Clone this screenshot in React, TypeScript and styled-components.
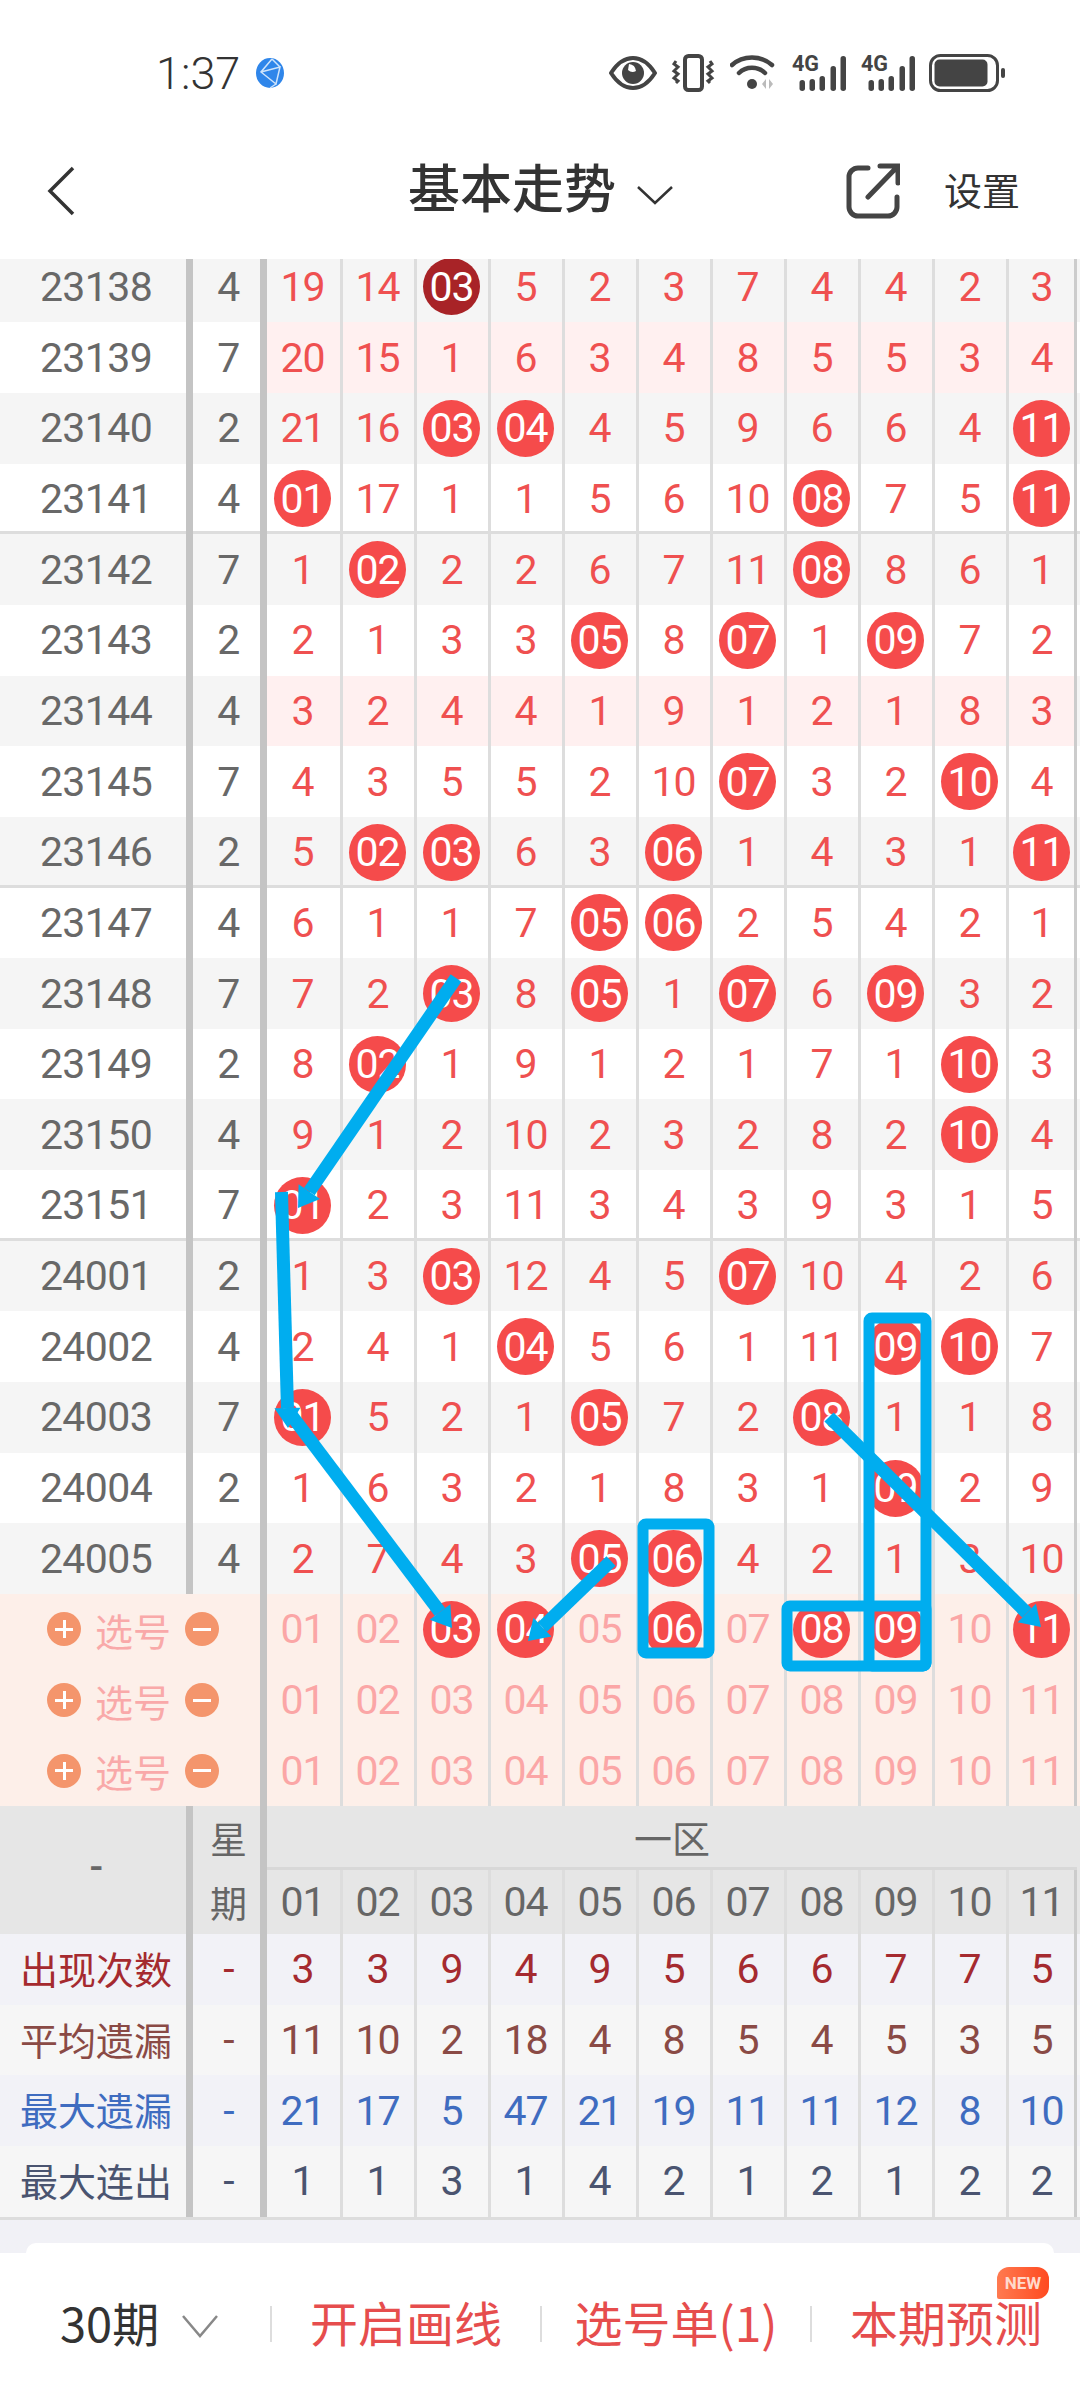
import styled, { createGlobalStyle } from 'styled-components';

const GlobalStyle = createGlobalStyle`
  html, body {
    margin: 0;
    padding: 0;
    background: #fff;
  }
  * {
    box-sizing: border-box;
  }
`;

const NUM_FONT = `Roboto, 'Noto Sans CJK SC', sans-serif`;
const CJK_FONT = `'Noto Sans CJK SC', 'Noto Sans', sans-serif`;
const ROW_H = 70.67;
const GRID = '193px 74px 76px repeat(9, 74px) 68px';

// "b" prefix = ball on this number
const ROWS = [
  ['23138', '4', '19 14 d03 5 2 3 7 4 4 2 3'],
  ['23139', '7', '20 15 1 6 3 4 8 5 5 3 4', 'hot'],
  ['23140', '2', '21 16 b03 b04 4 5 9 6 6 4 b11'],
  ['23141', '4', 'b01 17 1 1 5 6 10 b08 7 5 b11', 'sep'],
  ['23142', '7', '1 b02 2 2 6 7 11 b08 8 6 1'],
  ['23143', '2', '2 1 3 3 b05 8 b07 1 b09 7 2'],
  ['23144', '4', '3 2 4 4 1 9 1 2 1 8 3', 'hot'],
  ['23145', '7', '4 3 5 5 2 10 b07 3 2 b10 4'],
  ['23146', '2', '5 b02 b03 6 3 b06 1 4 3 1 b11', 'sep'],
  ['23147', '4', '6 1 1 7 b05 b06 2 5 4 2 1'],
  ['23148', '7', '7 2 b03 8 b05 1 b07 6 b09 3 2'],
  ['23149', '2', '8 b02 1 9 1 2 1 7 1 b10 3'],
  ['23150', '4', '9 1 2 10 2 3 2 8 2 b10 4'],
  ['23151', '7', 'b01 2 3 11 3 4 3 9 3 1 5', 'sep'],
  ['24001', '2', '1 3 b03 12 4 5 b07 10 4 2 6'],
  ['24002', '4', '2 4 1 b04 5 6 1 11 b09 b10 7'],
  ['24003', '7', 'b01 5 2 1 b05 7 2 b08 1 1 8'],
  ['24004', '2', '1 6 3 2 1 8 3 1 b09 2 9'],
  ['24005', '4', '2 7 4 3 b05 b06 4 2 1 3 10'],
];

const PICKS = [
  '01 02 b03 b04 05 b06 07 b08 b09 10 b11',
  '01 02 03 04 05 06 07 08 09 10 11',
  '01 02 03 04 05 06 07 08 09 10 11',
];

const STATS = [
  { label: '出现次数', color: '#a52a2f', bg: '#f2f2f7', nums: '3 3 9 4 9 5 6 6 7 7 5' },
  { label: '平均遗漏', color: '#8a4a45', bg: '#f6f6f6', nums: '11 10 2 18 4 8 5 4 5 3 5' },
  { label: '最大遗漏', color: '#3f6cc0', bg: '#f2f2f7', nums: '21 17 5 47 21 19 11 11 12 8 10' },
  { label: '最大连出', color: '#4a5470', bg: '#f6f6f6', nums: '1 1 3 1 4 2 1 2 1 2 2' },
];

const HEAD_NUMS = '01 02 03 04 05 06 07 08 09 10 11'.split(' ');

const Page = styled.div`
  position: relative;
  width: 1080px;
  height: 2400px;
  overflow: hidden;
  background: #f1f1f6;
`;

const TopArea = styled.header`
  position: relative;
  z-index: 2;
  height: 259px;
  background: #fff;
`;

const StatusBar = styled.div`
  display: flex;
  align-items: center;
  justify-content: space-between;
  height: 146px;
  padding: 0 75px 0 156px;
`;

const TimeBox = styled.div`
  display: flex;
  align-items: center;
  gap: 16px;
  font: 300 45px ${NUM_FONT};
  color: #333;
`;

const StatusIcons = styled.div`
  display: flex;
  align-items: center;
  gap: 14.4px;
`;

const NavBar = styled.div`
  display: flex;
  align-items: center;
  height: 90px;
  padding: 0 60px 0 46px;
`;

const Title = styled.div`
  display: flex;
  align-items: center;
  gap: 20px;
  margin: 0 0 12px 332px;
  font: 500 52px ${CJK_FONT};
  color: #333;
  svg {
    margin-top: 20px;
  }
`;

const NavRight = styled.div`
  display: flex;
  align-items: center;
  gap: 44px;
  margin-left: auto;
`;

const NavLabel = styled.span`
  padding-bottom: 6px;
  font: 400 38px ${CJK_FONT};
  color: #333;
`;

const Board = styled.div`
  margin-top: -7.4px;
`;

const Row = styled.div<{ $sep?: boolean; $bg: string }>`
  display: grid;
  grid-template-columns: ${GRID};
  height: ${ROW_H}px;
  background: ${({ $bg }) => $bg};
  box-shadow: ${({ $sep }) => ($sep ? 'inset 0 -3px 0 #ddd' : 'none')};
`;

const Cell = styled.div<{ $color?: string; $bg?: string }>`
  display: flex;
  align-items: center;
  justify-content: center;
  min-width: 0;
  padding-right: 2px;
  font: 400 41px ${NUM_FONT};
  letter-spacing: -1px;
  color: ${({ $color }) => $color || '#ef5050'};
  background: ${({ $bg }) => $bg || 'transparent'};
  border-right: 3px solid #ddd;
  &:last-child {
    padding-right: 0;
    border-right-color: #ccc;
  }
`;

const PeriodCell = styled.div<{ $label?: boolean; $color?: string }>`
  display: flex;
  align-items: center;
  justify-content: center;
  padding: ${({ $label }) => ($label ? '0 0 4px 6px' : '0 0 0 6px')};
  font: ${({ $label }) =>
    $label ? `400 38px ${CJK_FONT}` : `400 41px ${NUM_FONT}`};
  letter-spacing: ${({ $label }) => ($label ? '0' : '-0.6px')};
  color: ${({ $color }) => $color || '#686868'};
  border-right: 7px solid #c4c4c4;
`;

const WeekCell = styled(PeriodCell)`
  padding-left: 4px;
`;

const Ball = styled.span<{ $dark?: boolean }>`
  display: flex;
  align-items: center;
  justify-content: center;
  flex: none;
  width: 57px;
  height: 57px;
  border-radius: 50%;
  background: ${({ $dark }) => ($dark ? '#a82327' : '#f54b4b')};
  color: #fff;
`;

const PickLabel = styled.div`
  grid-column: 1 / 3;
  display: flex;
  align-items: center;
  padding: 0 0 0 47px;
  gap: 14px;
  font: 400 38px ${CJK_FONT};
  color: #f9a9a9;
  background: #fdefe9;
  border-right: 7px solid #c4c4c4;
`;

const Round = styled.span`
  position: relative;
  flex: none;
  width: 34px;
  height: 34px;
  border-radius: 50%;
  background: #f4956c;
  &::before {
    content: '';
    position: absolute;
    left: 8px;
    right: 8px;
    top: 15.5px;
    height: 3px;
    background: #fff;
  }
`;

const RoundPlus = styled(Round)`
  &::after {
    content: '';
    position: absolute;
    top: 8px;
    bottom: 8px;
    left: 15.5px;
    width: 3px;
    background: #fff;
  }
`;

const HeadBlock = styled.div`
  display: grid;
  grid-template-columns: ${GRID};
  grid-template-rows: 64px 64px;
  height: 128px;
  background: #e6e6e6;
`;

const HeadSide = styled(PeriodCell)`
  grid-row: 1 / 3;
  padding-bottom: 6px;
  font: 500 40px ${NUM_FONT};
`;

const HeadWeek = styled.div`
  grid-row: 1 / 3;
  grid-column: 2;
  display: grid;
  grid-template-rows: 64px 64px;
  align-items: center;
  justify-items: center;
  padding-left: 4px;
  font: 400 37px ${CJK_FONT};
  color: #666;
  border-right: 7px solid #c4c4c4;
`;

const HeadZone = styled.div`
  grid-column: 3 / -1;
  display: flex;
  align-items: center;
  justify-content: center;
  font: 400 38px ${CJK_FONT};
  color: #666;
  border-bottom: 3px solid #d8d8d8;
`;

const BottomShelf = styled.div`
  padding: 23px 26px 0;
  border-top: 3px solid #ddd;
`;

const ShelfCard = styled.div`
  height: 10px;
  background: #fff;
  border-radius: 20px 20px 0 0;
`;

const BottomBar = styled.footer`
  display: flex;
  align-items: center;
  height: 150px;
  padding: 0 0 8px 60px;
  background: #fff;
`;

const RangePicker = styled.div`
  display: flex;
  align-items: center;
  gap: 22px;
  width: 210px;
  padding-bottom: 5px;
  font: 400 47px ${CJK_FONT};
  color: #333;
  svg {
    margin-top: 10px;
  }
`;

const BarAction = styled.div`
  position: relative;
  display: flex;
  align-items: center;
  justify-content: center;
  width: 270px;
  height: 36px;
  padding-bottom: 5px;
  font: 400 48px ${CJK_FONT};
  color: #e64d4d;
  border-left: 2px solid #ddd;
`;

const NewBadge = styled.span`
  position: absolute;
  top: -39px;
  right: 31px;
  width: 52px;
  height: 32px;
  font: 700 17px/32px ${NUM_FONT};
  text-align: center;
  color: #ffd9cc;
  background: linear-gradient(90deg, #ff7a50, #ff4a20);
  border-radius: 12px 12px 12px 2px;
`;

const DrawLayer = styled.svg`
  position: absolute;
  left: 0;
  top: 0;
  z-index: 1;
  pointer-events: none;
`;

const BLUE = '#00adef';

const Arrow = ({ x1, y1, x2, y2 }: { x1: number; y1: number; x2: number; y2: number }) => {
  const len = Math.hypot(x2 - x1, y2 - y1);
  const ux = (x2 - x1) / len;
  const uy = (y2 - y1) / len;
  const bx = x2 - ux * 20;
  const by = y2 - uy * 20;
  const hw = 13;
  return (
    <>
      <line x1={x1} y1={y1} x2={bx} y2={by} stroke={BLUE} strokeWidth={13} strokeLinecap="butt" />
      <polygon
        points={`${x2},${y2} ${bx - uy * hw},${by + ux * hw} ${bx + uy * hw},${by - ux * hw}`}
        fill={BLUE}
      />
    </>
  );
};

const Num = ({ value }: { value: string }) => {
  if (value[0] === 'b') return <Ball>{value.slice(1)}</Ball>;
  if (value[0] === 'd') return <Ball $dark>{value.slice(1)}</Ball>;
  return <>{value}</>;
};

const Eye = () => (
  <svg width="48" height="34" viewBox="0 0 48 34" fill="none">
    <path d="M2 17C9 6 16 2 24 2s15 4 22 15c-7 11-14 15-22 15S9 28 2 17z" stroke="#444" strokeWidth="4" strokeLinejoin="round" />
    <circle cx="24" cy="17" r="11" fill="#444" />
    <path d="M20 8a8 8 0 0 1 7 7 7 7 0 0 1-8-1z" fill="#fff" />
  </svg>
);

const Vibrate = () => (
  <svg width="44" height="38" viewBox="0 0 44 38" fill="none" stroke="#444" strokeWidth="3">
    <rect x="14" y="2" width="17" height="34" rx="3.5" strokeWidth="4" />
    <path d="M5 7l-2 3 4 3-4 4 4 3-4 4 4 3-2 2" />
    <path d="M39 7l2 3-4 3 4 4-4 3 4 4-4 3 2 2" />
  </svg>
);

const Wifi = () => (
  <svg width="48" height="38" viewBox="0 0 48 38" fill="none" stroke="#444" strokeWidth="4.5" strokeLinecap="round">
    <path d="M2 11C13 1 31 1 42 11" />
    <path d="M9 19c7-7 19-7 26 0" />
    <circle cx="22" cy="30" r="5" fill="#444" stroke="none" />
    <path d="M36 25v10l-4-5zM39 25v10l4-5z" fill="#bbb" stroke="none" />
  </svg>
);

const Signal = () => (
  <svg width="54" height="50" viewBox="0 -6 54 50" fill="#444">
    <text x="0" y="17" fontFamily="Roboto, sans-serif" fontSize="22" fontWeight="700" textLength="27" lengthAdjust="spacingAndGlyphs">4G</text>
    <rect x="7.5" y="26" width="5.5" height="11" rx="2.7" />
    <rect x="17.5" y="25" width="5.5" height="12" rx="2.7" />
    <rect x="27.5" y="22" width="5.5" height="15" rx="2.7" />
    <rect x="38.5" y="12" width="5.5" height="25" rx="2.7" />
    <rect x="48.5" y="2" width="5.5" height="35" rx="2.7" />
  </svg>
);

const Battery = () => (
  <svg width="76" height="38" viewBox="0 0 76 38" fill="none">
    <rect x="1.5" y="1.5" width="67" height="35" rx="10" stroke="#444" strokeWidth="3" />
    <rect x="5.5" y="5.5" width="53" height="27" rx="5" fill="#444" />
    <rect x="72" y="14" width="4" height="10" rx="2" fill="#444" />
  </svg>
);

const Globe = () => (
  <svg width="28" height="32" viewBox="0 0 28 32">
    <ellipse cx="14" cy="16" rx="14" ry="15" fill="#2f86ea" />
    <path d="M16 2L5 15l15 12L24 10 5 15M16 2l8 8M20 27l-6 4" stroke="#cfe4fb" strokeWidth="1.5" fill="none" />
  </svg>
);

const App = () => {
  return (
    <Page>
      <GlobalStyle />
      <TopArea>
        <StatusBar>
          <TimeBox>
            1:37
            <Globe />
          </TimeBox>
          <StatusIcons>
            <Eye />
            <Vibrate />
            <Wifi />
            <Signal />
            <Signal />
            <Battery />
          </StatusIcons>
        </StatusBar>
        <NavBar>
          <svg width="30" height="50" viewBox="0 0 30 50" fill="none" stroke="#333" strokeWidth="3.5">
            <path d="M27 2L4 25l23 23" />
          </svg>
          <Title>
            基本走势
            <svg width="38" height="20" viewBox="0 0 38 20" fill="none" stroke="#333" strokeWidth="2.5">
              <path d="M2 2l17 16L36 2" />
            </svg>
          </Title>
          <NavRight>
            <svg width="54" height="56" viewBox="0 0 54 56" fill="none" stroke="#444" strokeWidth="5" strokeLinecap="round">
              <path d="M22 5H12a9 9 0 0 0-9 9v30a9 9 0 0 0 9 9h30a9 9 0 0 0 9-9V34" />
              <path d="M22 34L51 4M34 3h18v17" />
            </svg>
            <NavLabel>设置</NavLabel>
          </NavRight>
        </NavBar>
      </TopArea>

      <Board>
        {ROWS.map(([period, week, nums, kind], i) => {
          const grey = i % 2 === 0;
          return (
            <Row key={period} $bg={grey ? '#f5f5f5' : '#fff'} $sep={kind === 'sep'}>
              <PeriodCell>{period}</PeriodCell>
              <WeekCell>{week}</WeekCell>
              {nums.split(' ').map((n, j) => (
                <Cell key={j} $bg={kind === 'hot' ? '#fff0f0' : undefined}>
                  <Num value={n} />
                </Cell>
              ))}
            </Row>
          );
        })}

        {PICKS.map((nums, i) => (
          <Row key={i} $bg="#fdefe9">
            <PickLabel>
              <RoundPlus />
              选号
              <Round />
            </PickLabel>
            {nums.split(' ').map((n, j) => (
              <Cell key={j} $color="#fba6a6">
                <Num value={n} />
              </Cell>
            ))}
          </Row>
        ))}

        <HeadBlock>
          <HeadSide>-</HeadSide>
          <HeadWeek>
            <span>星</span>
            <span>期</span>
          </HeadWeek>
          <HeadZone>一区</HeadZone>
          {HEAD_NUMS.map((n) => (
            <Cell key={n} $color="#666">
              {n}
            </Cell>
          ))}
        </HeadBlock>

        {STATS.map((s) => (
          <Row key={s.label} $bg={s.bg}>
            <PeriodCell $label $color={s.color}>
              {s.label}
            </PeriodCell>
            <WeekCell $color={s.color}>-</WeekCell>
            {s.nums.split(' ').map((n, j) => (
              <Cell key={j} $color={s.color}>
                {n}
              </Cell>
            ))}
          </Row>
        ))}
      </Board>

      <BottomShelf>
        <ShelfCard />
      </BottomShelf>
      <BottomBar>
        <RangePicker>
          30期
          <svg width="38" height="26" viewBox="0 0 38 26" fill="none" stroke="#888" strokeWidth="2.5">
            <path d="M2 3l17 20L36 3" />
          </svg>
        </RangePicker>
        <BarAction>开启画线</BarAction>
        <BarAction>选号单(1)</BarAction>
        <BarAction>
          本期预测
          <NewBadge>NEW</NewBadge>
        </BarAction>
      </BottomBar>

      <DrawLayer width="1080" height="2400" fill="none">
        <Arrow x1={456} y1={978} x2={298} y2={1208} />
        <Arrow x1={281.5} y1={1192} x2={288} y2={1428} />
        <Arrow x1={292} y1={1416} x2={452} y2={1628} />
        <Arrow x1={611} y1={1561} x2={528} y2={1641} />
        <Arrow x1={829} y1={1417} x2={1041} y2={1627} />
        <rect x={643} y={1524} width={66} height={129} rx={3} stroke={BLUE} strokeWidth={11} />
        <rect x={869} y={1318} width={57} height={348} rx={3} stroke={BLUE} strokeWidth={11} />
        <rect x={787} y={1606} width={139} height={60} rx={3} stroke={BLUE} strokeWidth={11} />
      </DrawLayer>
    </Page>
  );
};

export default App;
